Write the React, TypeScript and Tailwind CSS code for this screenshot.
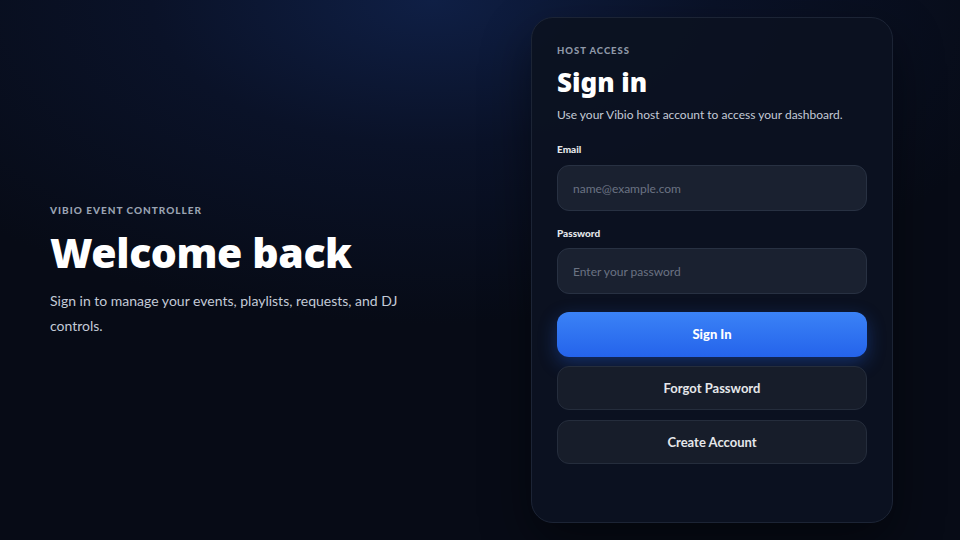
export default function App() {
  return (
    <div
      className="relative flex h-[540px] w-[960px] items-center overflow-hidden bg-[#070b16] pl-[50px] pr-[67px]"
      style={{ fontFamily: 'Lato, "Noto Sans", sans-serif' }}
    >
      <div className="pointer-events-none absolute inset-0 bg-[radial-gradient(ellipse_65%_60%_at_45%_0%,#0f1f45_0%,#0a1228_45%,transparent_100%)]" />
      <div className="relative flex flex-1 flex-col">
        <p className="text-[10px] font-black uppercase tracking-[0.1em] text-[#9aa3b2]">
          Vibio Event Controller
        </p>
        <h1 className="mt-[10px] font-['Noto_Sans',sans-serif] text-[41px] font-black leading-[48px] tracking-[-0.01em] text-white">
          Welcome back
        </h1>
        <p className="mt-[12px] max-w-[380px] text-[14px] leading-[25px] text-[#c3cad6]">
          Sign in to manage your events, playlists, requests, and DJ controls.
        </p>
      </div>
      <div className="relative flex h-[506px] w-[362px] flex-col rounded-[22px] border border-[#1c2435] bg-[#0c1221]/95 px-[25px] pt-[26px] shadow-[0_20px_50px_rgba(0,0,0,0.45)]">
        <p className="text-[9.5px] font-black uppercase tracking-[0.1em] text-[#8f98a8]">
          Host Access
        </p>
        <h2 className="mt-[6px] font-['Noto_Sans',sans-serif] text-[26px] font-black leading-[36px] text-white">
          Sign in
        </h2>
        <p className="mt-[6px] text-[12px] text-[#c3cad6]">
          Use your Vibio host account to access your dashboard.
        </p>
        <form className="mt-[18px] flex flex-col">
          <label className="text-[10px] font-black text-[#e5e7eb]">Email</label>
          <input
            type="email"
            placeholder="name@example.com"
            className="mt-[8px] h-[46px] w-full rounded-[12px] border border-[#283142] bg-[#1a2130] px-[15px] text-[12px] text-white outline-none placeholder:text-[#6b7383]"
          />
          <label className="mt-[15px] text-[10px] font-black text-[#e5e7eb]">
            Password
          </label>
          <input
            type="password"
            placeholder="Enter your password"
            className="mt-[7px] h-[46px] w-full rounded-[12px] border border-[#283142] bg-[#1a2130] px-[15px] text-[12px] text-white outline-none placeholder:text-[#6b7383]"
          />
          <button
            type="button"
            className="mt-[18px] h-[45px] w-full rounded-[12px] bg-gradient-to-b from-[#3b82f6] to-[#2563eb] text-[13px] font-black text-white shadow-[0_6px_18px_rgba(37,99,235,0.35)]"
          >
            Sign In
          </button>
          <button
            type="button"
            className="mt-[9px] h-[44px] w-full rounded-[12px] border border-[#252d3c] bg-[#171d2a] text-[13px] font-bold text-[#e5e7eb]"
          >
            Forgot Password
          </button>
          <button
            type="button"
            className="mt-[10px] h-[44px] w-full rounded-[12px] border border-[#252d3c] bg-[#171d2a] text-[13px] font-bold text-[#e5e7eb]"
          >
            Create Account
          </button>
        </form>
      </div>
    </div>
  );
}
